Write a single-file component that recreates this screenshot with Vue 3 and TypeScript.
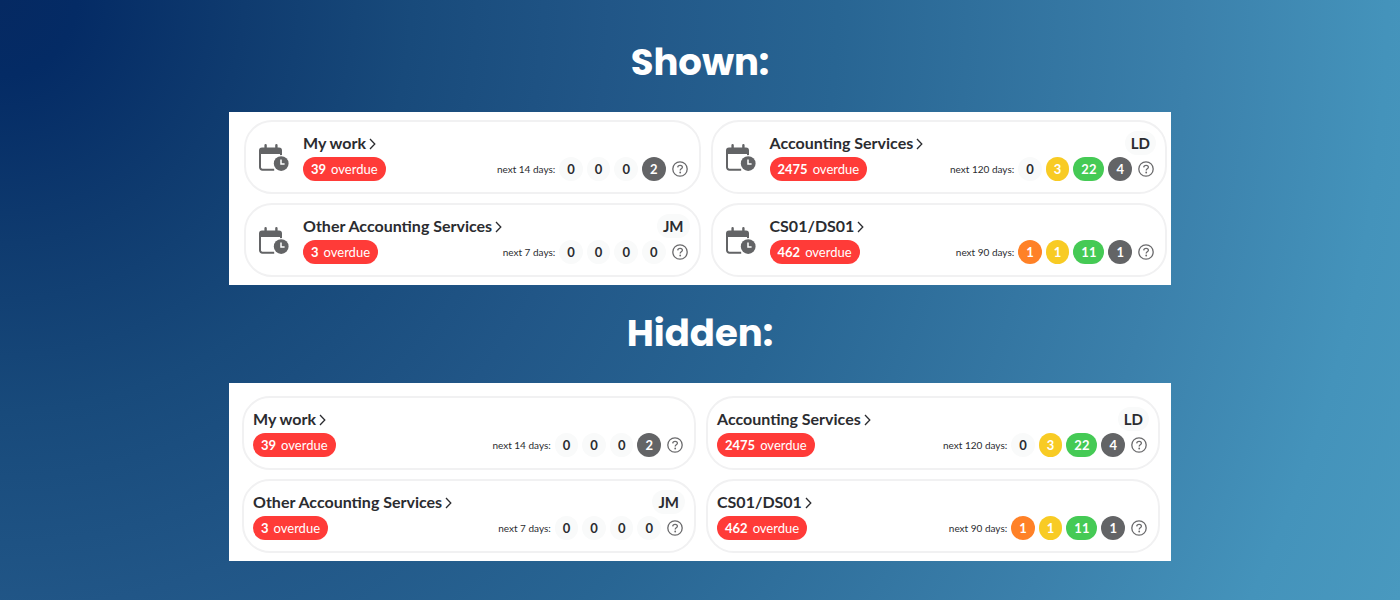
<script setup lang="ts">
interface Count {
  value: number
  tone: 'plain' | 'orange' | 'yellow' | 'green' | 'grey'
}

interface WorkCard {
  title: string
  overdue: number
  days: number
  initials?: string
  counts: Count[]
}

interface Section {
  id: string
  heading: string
  icons: boolean
}

const sections: Section[] = [
  { id: 'shown', heading: 'Shown:', icons: true },
  { id: 'hidden', heading: 'Hidden:', icons: false },
]

const cards: WorkCard[] = [
  {
    title: 'My work',
    overdue: 39,
    days: 14,
    counts: [
      { value: 0, tone: 'plain' },
      { value: 0, tone: 'plain' },
      { value: 0, tone: 'plain' },
      { value: 2, tone: 'grey' },
    ],
  },
  {
    title: 'Accounting Services',
    overdue: 2475,
    days: 120,
    initials: 'LD',
    counts: [
      { value: 0, tone: 'plain' },
      { value: 3, tone: 'yellow' },
      { value: 22, tone: 'green' },
      { value: 4, tone: 'grey' },
    ],
  },
  {
    title: 'Other Accounting Services',
    overdue: 3,
    days: 7,
    initials: 'JM',
    counts: [
      { value: 0, tone: 'plain' },
      { value: 0, tone: 'plain' },
      { value: 0, tone: 'plain' },
      { value: 0, tone: 'plain' },
    ],
  },
  {
    title: 'CS01/DS01',
    overdue: 462,
    days: 90,
    counts: [
      { value: 1, tone: 'orange' },
      { value: 1, tone: 'yellow' },
      { value: 11, tone: 'green' },
      { value: 1, tone: 'grey' },
    ],
  },
]
</script>

<template>
  <main class="page">
    <section v-for="section in sections" :key="section.id" class="section">
      <h2 class="heading">{{ section.heading }}</h2>
      <div class="panel" :class="section.id">
        <article v-for="card in cards" :key="card.title" class="card">
          <svg v-if="section.icons" class="calendar" viewBox="0 0 30 28" aria-hidden="true">
            <path d="M6.6 1.200v4M17.400 1.200v4" fill="none" stroke="#636466" stroke-width="2.400" stroke-linecap="round" />
            <path d="M0 10V6.500a3 3 0 0 1 3-3h17a3 3 0 0 1 3 3V10z" fill="#636466" />
            <path d="M1 9v14.300a2.400 2.400 0 0 0 2.400 2.400h11.800M22 9v3" fill="none" stroke="#636466" stroke-width="2" />
            <circle cx="22.200" cy="19.600" r="8.600" fill="#fff" />
            <circle cx="22.200" cy="19.600" r="7.400" fill="#636466" />
            <path d="M22 15.400v4.700h3.600" fill="none" stroke="#fff" stroke-width="1.500" />
          </svg>
          <div class="body">
            <div class="row">
              <a class="title" href="#">
                {{ card.title }}
                <svg class="chevron" viewBox="0 0 7 12" aria-hidden="true">
                  <path d="M1 1l4.800 5L1 11" fill="none" stroke="currentColor" stroke-width="1.300" />
                </svg>
              </a>
              <span v-if="card.initials" class="initials">{{ card.initials }}</span>
            </div>
            <div class="row">
              <span class="overdue"><b>{{ card.overdue }}</b><span>overdue</span></span>
              <div class="upcoming">
                <span class="label">next {{ card.days }} days:</span>
                <span v-for="(count, i) in card.counts" :key="i" class="count" :class="count.tone">{{ count.value }}</span>
                <button class="help" type="button" aria-label="Help">
                  <svg viewBox="0 0 16 16" aria-hidden="true">
                    <circle cx="8" cy="8" r="7.200" fill="none" stroke="#6b6b6d" stroke-width="1.300" />
                    <path d="M5.700 6.400c.1-1.400 1.100-2.100 2.400-2.100 1.400 0 2.300.8 2.300 1.900 0 1.600-2.200 1.700-2.200 3.300" fill="none" stroke="#6b6b6d" stroke-width="1.300" />
                    <circle cx="8.200" cy="11.500" r=".9" fill="#6b6b6d" />
                  </svg>
                </button>
              </div>
            </div>
          </div>
        </article>
      </div>
    </section>
  </main>
</template>

<style>
body {
  margin: 0;
}
</style>

<style scoped>
.page {
  box-sizing: border-box;
  min-height: 100vh;
  padding: 13px 16px 20px;
  background: radial-gradient(circle farthest-corner at 0 0, #052962 0%, #042b65 5%, #0f3b6f 16%, #184a7b 27%, #215687 40%, #286593 55%, #3b80ab 78%, #4493bb 91%, #4999bf 100%);
  font-family: Lato, "Liberation Sans", sans-serif;
  color: #2b2c30;
}

.section {
  max-width: 942px;
  margin: 0 auto;
  display: flow-root;
}

.heading {
  margin: 19px 0 20px;
  font-family: Poppins, Inter, sans-serif;
  font-size: 37px;
  line-height: 59px;
  font-weight: 700;
  text-align: center;
  color: #fff;
}

.section:first-child .heading {
  margin-top: 20px;
}

.panel {
  display: grid;
  grid-template-columns: repeat(2, minmax(0, 1fr));
  gap: 9px 10px;
  background: #fff;
}

.shown {
  padding: 8px 4px 8px 15px;
}

.hidden {
  padding: 13px 11px 8px 13px;
}

.card {
  box-sizing: border-box;
  min-height: 74px;
  display: flex;
  align-items: flex-start;
  gap: 14px;
  padding: 9px 11px 9px 13px;
  border: 2px solid #f1f1f2;
  border-radius: 28px;
}

.hidden .card {
  padding-left: 9px;
}

.calendar {
  flex: none;
  width: 30px;
  height: 28px;
  margin-top: 13px;
}

.body {
  flex: 1;
  display: grid;
  gap: 2px;
}

.row {
  display: flex;
  align-items: center;
  justify-content: space-between;
  height: 24px;
}

.title {
  display: flex;
  align-items: center;
  gap: 3px;
  font-size: 16px;
  line-height: 24px;
  font-weight: 700;
  color: inherit;
  text-decoration: none;
}

.chevron {
  width: 7px;
  height: 12px;
  margin-top: 2px;
}

.initials {
  margin-right: -2px;
  padding: 0 6px;
  border-radius: 12px;
  background: #f9fafa;
  font-size: 15px;
  line-height: 24px;
  font-weight: 700;
}

.overdue {
  display: flex;
  gap: 5px;
  padding: 0 8px;
  border-radius: 12px;
  background: #ff3b38;
  font-size: 13px;
  line-height: 24px;
  color: #fff;
}

.upcoming {
  display: flex;
  align-items: center;
  gap: 4px;
}

.label {
  font-size: 10px;
  line-height: 24px;
}

.count {
  padding: 0 8px;
  border-radius: 12px;
  font-size: 13px;
  line-height: 24px;
  font-weight: 700;
  text-align: center;
  color: #fff;
}

.plain {
  background: #f9fafa;
  color: #2b2c30;
}

.orange {
  background: #ff8127;
}

.yellow {
  background: #f8cb24;
}

.green {
  background: #45ca55;
}

.grey {
  background: #636466;
}

.help {
  display: flex;
  margin-left: 2px;
  padding: 0;
  border: 0;
  background: none;
  cursor: pointer;
}

.help svg {
  width: 16px;
  height: 16px;
}
</style>
